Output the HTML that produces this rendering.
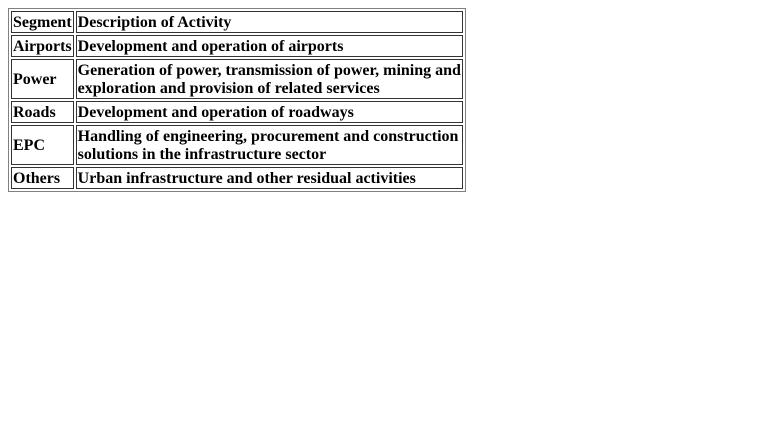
<!DOCTYPE html>
<html><head><style>
body{margin:8px;background:#fff;font-family:"Liberation Serif",serif;font-size:16px;font-weight:bold;color:#000}
table{border:1px solid #808080;border-spacing:2px;width:458px;border-collapse:separate}
td{border:1px solid #333;padding:2px 1px 0 1px;line-height:18px;font-weight:bold}
</style></head><body>
<table>
<tr><td>Segment</td><td>Description of Activity</td></tr>
<tr><td>Airports</td><td>Development and operation of airports</td></tr>
<tr><td>Power</td><td>Generation of power, transmission of power, mining and exploration and provision of related services</td></tr>
<tr><td>Roads</td><td>Development and operation of roadways</td></tr>
<tr><td>EPC</td><td>Handling of engineering, procurement and construction solutions in the infrastructure sector</td></tr>
<tr><td>Others</td><td>Urban infrastructure and other residual activities</td></tr>
</table>
</body></html>
